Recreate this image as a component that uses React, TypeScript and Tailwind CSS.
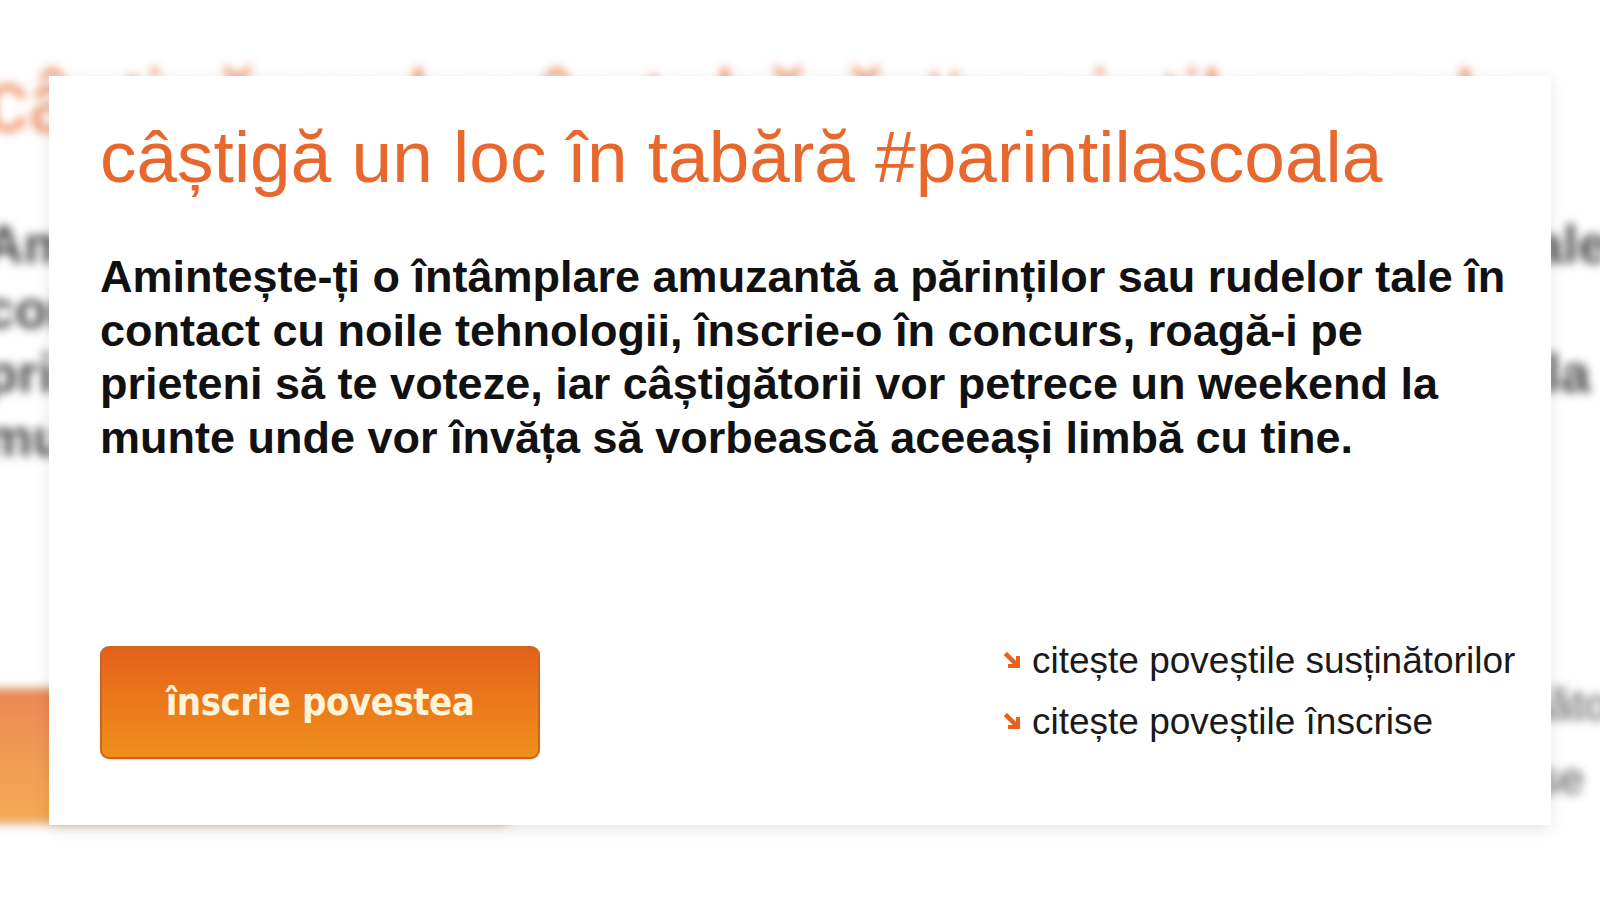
import React from "react";

const Bullet = () => (
  <svg width="18" height="18" viewBox="0 0 18 18" className="shrink-0">
    <path d="M3 3 L13 13" stroke="#e8621c" strokeWidth="4.5" strokeLinecap="square" />
    <path d="M14 6 L14 14 L6 14" stroke="#e8621c" strokeWidth="4" fill="none" strokeLinecap="square" />
  </svg>
);

const Card = ({ shadow }: { shadow?: boolean }) => (
  <div
    className={
      "w-[1502px] h-[749px] bg-white pl-[51px] pt-[44px] flex flex-col font-['Liberation_Sans',Arial,sans-serif] " +
      (shadow ? "shadow-[0_4px_14px_rgba(0,0,0,0.10)]" : "")
    }
  >
    <h1 className="text-[73px] leading-none text-[#e8672d] whitespace-nowrap font-normal">
      câștigă un loc în tabără #parintilascoala
    </h1>
    <p className="mt-[57px] w-[1425px] text-[45px] leading-[53.6px] font-bold text-[#111111]">
      Amintește-ți o întâmplare amuzantă a părinților sau rudelor tale în contact cu noile tehnologii, înscrie-o în
      concurs, roagă-i pe prieteni să te voteze, iar câștigătorii vor petrece un weekend la munte unde vor învăța să
      vorbească aceeași limbă cu tine.
    </p>
    <div className="mt-[166px] flex items-start">
      <button className="mt-[16px] w-[440px] h-[113px] shrink-0 rounded-[9px] border-2 border-[#c9661f] bg-gradient-to-b from-[#e4601a] to-[#f0901c] flex items-center justify-center text-[#fff3d8] text-[38px] font-bold font-['DejaVu_Sans_Condensed','DejaVu_Sans',sans-serif] tracking-[-0.5px] shadow-[0_1px_2px_rgba(0,0,0,0.15)]">
        înscrie povestea
      </button>
      <div className="ml-[464px] flex flex-col text-[37px] leading-[61px] text-[#1a1a1a] whitespace-nowrap">
        <div className="flex items-center gap-[10px]">
          <Bullet />
          <span>citește poveștile susținătorilor</span>
        </div>
        <div className="flex items-center gap-[10px]">
          <Bullet />
          <span>citește poveștile înscrise</span>
        </div>
      </div>
    </div>
  </div>
);

export default function App() {
  return (
    <div className="relative w-[1600px] h-[900px] overflow-hidden bg-white">
      <div className="absolute inset-0 blur-[5px] opacity-75">
        <div className="w-[1600px] h-[900px] pl-[49px] pt-[76px] scale-[1.2] origin-[677px_436px]">
          <Card />
        </div>
      </div>
      <div className="absolute left-[49px] top-[76px]">
        <Card shadow />
      </div>
    </div>
  );
}
